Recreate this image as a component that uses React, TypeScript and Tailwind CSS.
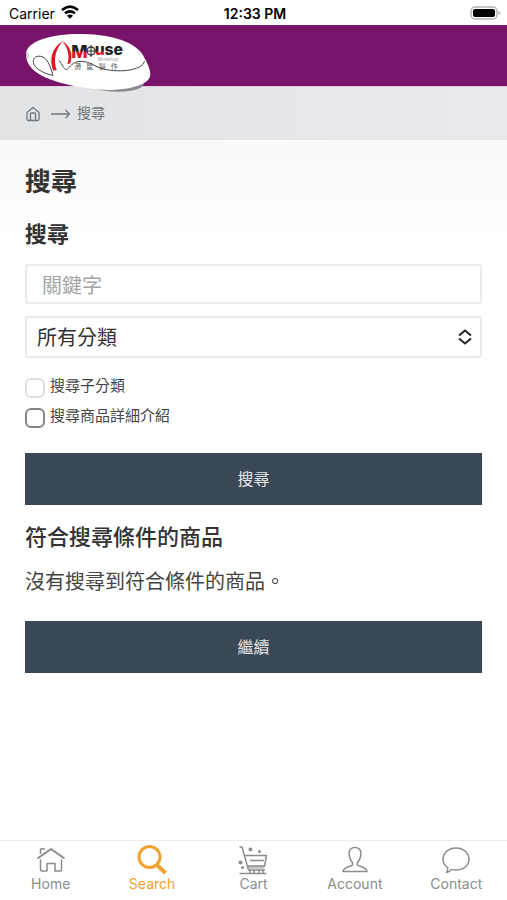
import { useState } from "react";
import type { ReactNode } from "react";

const tabs: { name: string; href: string; icon: ReactNode }[] = [
  {
    name: "Home",
    href: "#home",
    icon: (
      <>
        <path d="M1.500 13.500 15 4 28.500 13.500" strokeWidth="2" />
        <path d="M4.500 9V4h4.500" />
        <path d="M4.500 14.500v10q0 1.500 1.500 1.500h5v-7.500h8V26h5q1.500 0 1.500-1.500v-10" />
      </>
    ),
  },
  {
    name: "Search",
    href: "#search",
    icon: (
      <>
        <circle cx="12.500" cy="12" r="10.500" strokeWidth="3" />
        <path d="m20 20 8.500 8" strokeWidth="4" />
      </>
    ),
  },
  {
    name: "Cart",
    href: "#cart",
    icon: (
      <>
        <path d="M1.500 2h2.500L10.500 25h16.500M6.500 10.500h22l-2 10.500H10M12 15.500h14" />
        <path d="M10 22.500h16.500" strokeWidth="2.500" strokeOpacity=".5" />
        <path d="M1.500 28.500h27" />
        <path d="M12 25v3M16 25v3M21 25v3M25 25v3" />
        <g fill="currentColor" stroke="none">
          <circle cx="12.500" cy="4.500" r="2" />
          <circle cx="21.500" cy="6.500" r="1.500" />
          <circle cx="2.500" cy="17.500" r="2" />
          <circle cx="4.500" cy="22.500" r="1.500" />
        </g>
      </>
    ),
  },
  {
    name: "Account",
    href: "#account",
    icon: (
      <path d="M15 2.500c4 0 5.800 2.600 5.800 6 0 4-1.300 7-3.300 9v2.500c1.500 1.500 9 1.500 9.500 6.500H3c.5-5 8-5 9.500-6.500v-2.500c-2-2-3.300-5-3.300-9 0-3.400 1.800-6 5.800-6Z" />
    ),
  },
  {
    name: "Contact",
    href: "#contact",
    icon: (
      <path d="M15 3C22.500 3 28 8 28 14.300S22.500 25 15 25q-2.500 0-4.500-.6-2 2.800-5 3.100 1.500-2 1.300-4.800C3.500 20.500 2 17.800 2 14.300 2 8 7.500 3 15 3Z" />
    ),
  },
];

const StatusBar = () => (
  <div className="grid h-[25px] grid-cols-3 items-center pt-0.5 pr-1.5 pl-[9px] font-['Inter',sans-serif] text-sm leading-5 text-black">
    <div className="flex items-center gap-1.5">
      <span>Carrier</span>
      <svg viewBox="0 0 54 42" className="-mt-1 h-3.5 w-[18px]" fill="none" stroke="black" strokeWidth="8">
        <path d="M3 15Q27-5 51 15M12 25q15-12 30 0" />
        <path d="m27 41-9-9q9-7 18 0Z" fill="black" stroke="none" />
      </svg>
    </div>
    <span className="text-center font-semibold">12:33 PM</span>
    <svg viewBox="0 0 31 14" className="-mt-0.5 h-3.5 w-[31px] justify-self-end">
      <rect x="1" y="1" width="26" height="12" rx="4" fill="white" stroke="#b5b5b5" strokeWidth="1.500" />
      <rect x="3" y="3" width="22" height="8" rx="2" fill="black" />
      <path d="M28.500 5q2 .5 2 2t-2 2Z" fill="#b5b5b5" />
    </svg>
  </div>
);

const Logo = () => (
  <svg viewBox="45 25 381 180" className="h-[60px] w-[127px]" role="img" aria-label="Mouse Workshop">
    <defs>
      <linearGradient id="wordmark" gradientUnits="userSpaceOnUse" x1="0" y1="66" x2="0" y2="100">
        <stop offset=".35" stopColor="#222" />
        <stop offset=".5" stopColor="#df1722" />
      </linearGradient>
    </defs>
    <path d="M110 150C190 184 290 206 350 200c35-4 50-12 52-26L300 130Z" fill="#8b8b90" />
    <path
      d="M48 88C49 48 130 26 220 28c92 2 158 26 180 65 20 37 32 64 6 80-36 22-104 29-180 17C150 178 46 154 48 88Z"
      fill="white"
    />
    <g fill="none" strokeLinecap="round">
      <path d="M53 101c-3-8-6-13-2-16 4-1 3 8 7 13" stroke="#999" strokeWidth="2" />
      <path d="M129 152C105 148 80 135 72 119c-7-15 4-27 20-24 19 3 28 26 36 54" stroke="#444" strokeWidth="3" />
      <path d="M148 108c9 12 13 25 21 27 8-1 13-20 35-24 33-4 40 10 70 20 43 14 123 9 129-20" stroke="#444" strokeWidth="3" />
    </g>
    <path d="M130 138C116 104 126 68 159 48c-22 24-30 56-19 88Z" fill="#df1722" />
    <path d="M157 49c24 16 33 40 24 67l-9 3c8-25 2-49-15-70Z" fill="#df1722" />
    <g fontFamily="Inter, sans-serif" fontWeight="800">
      <text x="184" y="101" fontSize="52" fill="url(#wordmark)">
        M
      </text>
      <text x="254" y="90" fontSize="47">
        <tspan fill="url(#wordmark)">u</tspan>
        <tspan fill="#222">se</tspan>
      </text>
    </g>
    <circle cx="243" cy="79" r="12" fill="white" stroke="#333" strokeWidth="4" />
    <path d="M243 61v36M228 79h30" stroke="#333" strokeWidth="3" />
    <text x="262" y="109" fontFamily="Inter, sans-serif" fontSize="13" fontStyle="italic" fill="#999">
      Workshop
    </text>
    <g fontFamily="'Noto Sans CJK TC', sans-serif" fontSize="21" fill="#555">
      <text x="193" y="134">滑</text>
      <text x="229" y="134">鼠</text>
      <text x="266" y="134">製</text>
      <text x="302" y="134">作</text>
    </g>
  </svg>
);

const Breadcrumb = () => (
  <nav
    aria-label="breadcrumb"
    className="flex h-[53px] items-center bg-linear-to-r from-[#e1e3e5] to-[#e9eaed] px-[25px] pb-1 text-sm text-[#73777c]"
  >
    <a href="#home" aria-label="Home">
      <svg viewBox="0 0 16 16" className="mt-1 size-4" fill="none" stroke="currentColor" strokeWidth="1.300" strokeLinejoin="round">
        <path d="M2 6.500 8 1.500l6 5V13q0 1.500-1.500 1.500h-9Q2 14.500 2 13Z" />
        <path d="M5.500 14.500V8q0-1 1-1h3q1 0 1 1v6.500" />
      </svg>
    </a>
    <svg viewBox="0 0 20 10" className="mt-1 mr-1.5 ml-2.5 h-2.5 w-5" fill="none" stroke="currentColor" strokeWidth="1.300">
      <path d="M0 5h18.500M14.500 1l4 4-4 4" />
    </svg>
    <a href="#search">搜尋</a>
  </nav>
);

const SearchForm = () => {
  const [keyword, setKeyword] = useState("");

  return (
    <form onSubmit={(e) => e.preventDefault()}>
      <input
        type="text"
        aria-label="關鍵字"
        placeholder="關鍵字"
        value={keyword}
        onChange={(e) => setKeyword(e.target.value)}
        className="block h-10 w-full rounded-[3px] border-2 border-[#ebebeb] bg-white px-[15px] text-xl leading-7 outline-none placeholder:text-[#a3a3a3]"
      />
      <div className="relative mt-3">
        <select
          aria-label="所有分類"
          className="block h-[42px] w-full appearance-none rounded-[3px] border-2 border-[#ebebeb] bg-white px-2.5 text-xl leading-7 text-[#333] outline-none"
        >
          <option>所有分類</option>
        </select>
        <svg
          viewBox="0 0 14 16"
          className="pointer-events-none absolute top-[13px] right-2.5 h-4 w-3.5"
          fill="none"
          stroke="#222"
          strokeWidth="2"
        >
          <path d="m1 6.500 6-5 6 5M1 9.500l6 5 6-5" />
        </svg>
      </div>

      <div className="mt-[15px] flex flex-col gap-[5px] text-[15px] leading-6 text-[#444]">
        <label className="flex gap-[5px]">
          <input
            type="checkbox"
            disabled
            className="mt-[5px] size-5 appearance-none rounded-md border-2 border-[#dedede] bg-white"
          />
          搜尋子分類
        </label>
        <label className="flex gap-[5px]">
          <input
            type="checkbox"
            className="mt-[5px] size-5 appearance-none rounded-md border-2 border-[#858585] bg-white checked:bg-[#3a4754]"
          />
          搜尋商品詳細介紹
        </label>
      </div>

      <button type="submit" className="mt-[25px] h-[52px] w-full bg-[#3a4754] pb-0.5 text-base text-[#e4e7ea]">
        搜尋
      </button>
    </form>
  );
};

const TabBar = () => (
  <nav className="grid h-[60px] grid-cols-5 border-t border-[#ececec] bg-white font-['Inter',sans-serif]">
    {tabs.map((item) => (
      <a
        key={item.name}
        href={item.href}
        className={`flex flex-col items-center pt-1 text-sm leading-[18px] ${
          item.name === "Search" ? "text-[#f3a12f]" : "text-[#8c8c8c]"
        }`}
      >
        <svg viewBox="0 0 30 30" className="size-[30px]" fill="none" stroke="currentColor" strokeWidth="1.500" strokeLinejoin="round">
          {item.icon}
        </svg>
        <span>{item.name}</span>
      </a>
    ))}
  </nav>
);

export default function App() {
  return (
    <div lang="zh-Hant" className="flex min-h-screen flex-col bg-white font-['Noto_Sans_CJK_TC',sans-serif] text-[#333]">
      <StatusBar />
      <header className="relative flex h-[62px] items-start border-b border-[#e2cfe0] bg-[#771368] px-[25px] pt-2">
        <a href="#home" className="relative z-10 shrink-0">
          <Logo />
        </a>
      </header>
      <Breadcrumb />
      <main className="flex-1 bg-linear-to-b from-[#f9f9f9] to-white to-15% px-[25px] pt-[22px] pb-8">
        <h1 className="text-[26px] leading-9 font-bold">搜尋</h1>
        <h2 className="mt-5 mb-[18px] text-[22px] leading-7 font-bold">搜尋</h2>
        <SearchForm />
        <h2 className="mt-4 text-[22px] leading-7 font-medium">符合搜尋條件的商品</h2>
        <p className="mt-[18px] text-xl leading-7 text-[#444]">沒有搜尋到符合條件的商品。</p>
        <button type="button" className="mt-[26px] h-[52px] w-full bg-[#3a4754] pb-0.5 text-base text-[#e4e7ea]">
          繼續
        </button>
      </main>
      <TabBar />
    </div>
  );
}
